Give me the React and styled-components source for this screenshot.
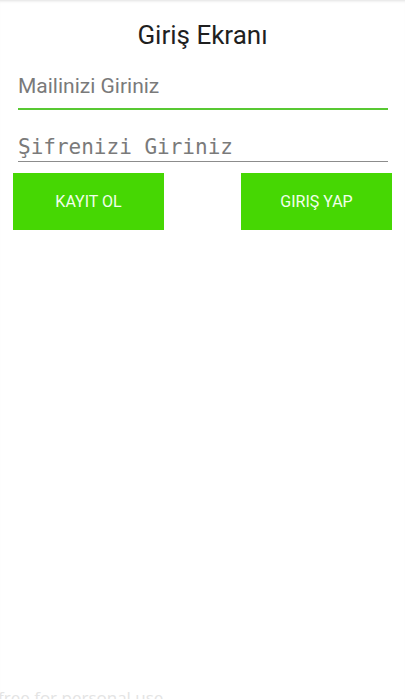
import React from 'react';
import styled, { createGlobalStyle } from 'styled-components';

const Global = createGlobalStyle`
  html, body {
    margin: 0;
    padding: 0;
    background: #fff;
  }
  body {
    font-family: Roboto, "Liberation Sans", sans-serif;
  }
`;

const Screen = styled.div`
  width: 405px;
  height: 699px;
  overflow: hidden;
  display: flex;
  flex-direction: column;
  background: #fff;
  box-shadow: inset 0 3px 3px -2px rgba(0, 0, 0, 0.12);
`;

const Title = styled.h1`
  margin: 20px 0 0;
  height: 30px;
  line-height: 30px;
  text-align: center;
  font-size: 26px;
  font-weight: 400;
  color: #1f1f1f;
`;

const Form = styled.div`
  display: flex;
  flex-direction: column;
  padding: 0 17px 0 18px;
  margin-top: 14px;
`;

const Field = styled.div`
  display: flex;
  align-items: center;
  height: ${p => p.h}px;
  border-bottom: ${p => (p.active ? '2px solid #58c832' : '1px solid #8c8c8c')};
  padding-top: ${p => p.pt || 0}px;
  font-family: ${p => (p.mono ? '"DejaVu Sans Mono", monospace' : 'Roboto, sans-serif')};
  font-size: ${p => (p.mono ? 21 : 21)}px;
  color: #7a7a7a;
  box-sizing: border-box;
`;

const Buttons = styled.div`
  display: flex;
  justify-content: space-between;
  padding: 0 13px;
  margin-top: 11px;
`;

const Button = styled.button`
  width: ${p => p.w}px;
  height: 57px;
  border: none;
  background: #46d703;
  color: #f2ffec;
  font-family: Roboto, sans-serif;
  font-size: 16px;
  padding: 0;
  margin: 0;
`;

const Spacer = styled.div`
  flex: 1;
`;

const Watermark = styled.div`
  margin: 0 0 -9px -2px;
  height: 22px;
  font-family: "Open Sans", sans-serif;
  font-size: 17px;
  color: #e4e4e4;
`;

export default function App() {
  return (
    <Screen>
      <Global />
      <Title>Giriş Ekranı</Title>
      <Form>
        <Field h={46} active>Mailinizi Giriniz</Field>
        <Field h={52} mono pt={22}>Şifrenizi Giriniz</Field>
      </Form>
      <Buttons>
        <Button w={151}>KAYIT OL</Button>
        <Button w={151}>GIRIŞ YAP</Button>
      </Buttons>
      <Spacer />
      <Watermark>free for personal use</Watermark>
    </Screen>
  );
}
